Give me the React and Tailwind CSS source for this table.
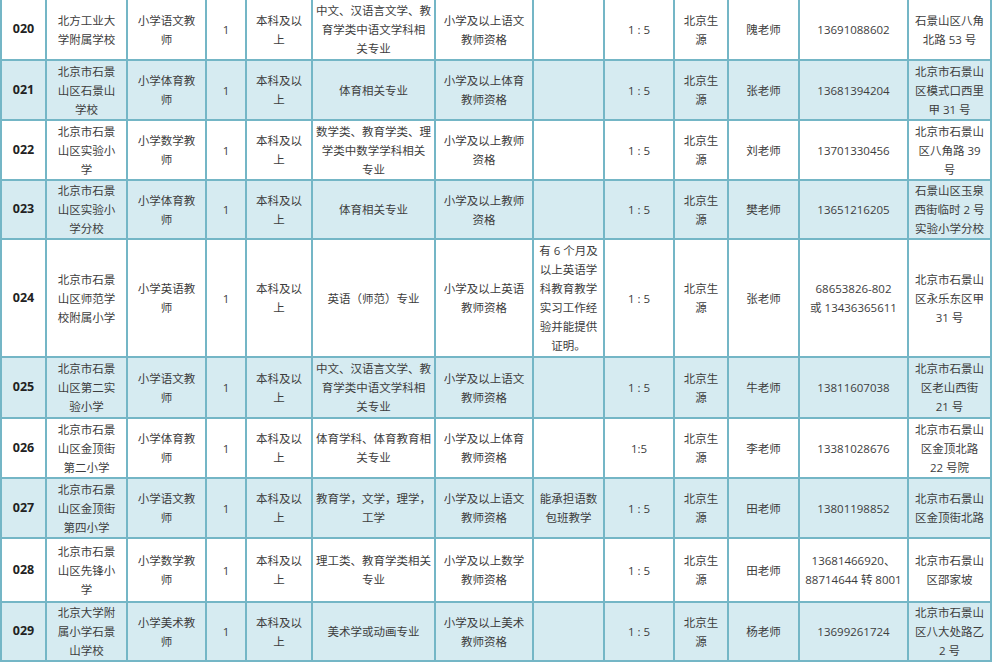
const cols = [45, 81, 79, 40, 66, 123, 98, 71, 70, 54, 71, 109, 83];

const rows = [
  {
    h: "h-[60px]",
    no: "020",
    cells: [
      ["北方工业大", "学附属学校"],
      ["小学语文教", "师"],
      ["1"],
      ["本科及以", "上"],
      ["中文、汉语言文学、教", "育学类中语文学科相", "关专业"],
      ["小学及以上语文", "教师资格"],
      [],
      ["1 : 5"],
      ["北京生", "源"],
      ["隗老师"],
      ["13691088602"],
      ["石景山区八角", "北路 53 号"],
    ],
  },
  {
    h: "h-[60px]",
    no: "021",
    cells: [
      ["北京市石景", "山区石景山", "学校"],
      ["小学体育教", "师"],
      ["1"],
      ["本科及以", "上"],
      ["体育相关专业"],
      ["小学及以上体育", "教师资格"],
      [],
      ["1 : 5"],
      ["北京生", "源"],
      ["张老师"],
      ["13681394204"],
      ["北京市石景山", "区模式口西里", "甲 31 号"],
    ],
  },
  {
    h: "h-[60px]",
    no: "022",
    cells: [
      ["北京市石景", "山区实验小", "学"],
      ["小学数学教", "师"],
      ["1"],
      ["本科及以", "上"],
      ["数学类、教育学类、理", "学类中数学学科相关", "专业"],
      ["小学及以上教师", "资格"],
      [],
      ["1 : 5"],
      ["北京生", "源"],
      ["刘老师"],
      ["13701330456"],
      ["北京市石景山", "区八角路 39", "号"],
    ],
  },
  {
    h: "h-[59px]",
    no: "023",
    cells: [
      ["北京市石景", "山区实验小", "学分校"],
      ["小学体育教", "师"],
      ["1"],
      ["本科及以", "上"],
      ["体育相关专业"],
      ["小学及以上教师", "资格"],
      [],
      ["1 : 5"],
      ["北京生", "源"],
      ["樊老师"],
      ["13651216205"],
      ["石景山区玉泉", "西街临时 2 号", "实验小学分校"],
    ],
  },
  {
    h: "h-[118px]",
    no: "024",
    cells: [
      ["北京市石景", "山区师范学", "校附属小学"],
      ["小学英语教", "师"],
      ["1"],
      ["本科及以", "上"],
      ["英语（师范）专业"],
      ["小学及以上英语", "教师资格"],
      ["有 6 个月及", "以上英语学", "科教育教学", "实习工作经", "验并能提供", "证明。"],
      ["1 : 5"],
      ["北京生", "源"],
      ["张老师"],
      ["68653826-802", "或 13436365611"],
      ["北京市石景山", "区永乐东区甲", "31 号"],
    ],
  },
  {
    h: "h-[61px]",
    no: "025",
    cells: [
      ["北京市石景", "山区第二实", "验小学"],
      ["小学语文教", "师"],
      ["1"],
      ["本科及以", "上"],
      ["中文、汉语言文学、教", "育学类中语文学科相", "关专业"],
      ["小学及以上语文", "教师资格"],
      [],
      ["1 : 5"],
      ["北京生", "源"],
      ["牛老师"],
      ["13811607038"],
      ["北京市石景山", "区老山西街", "21 号"],
    ],
  },
  {
    h: "h-[60px]",
    no: "026",
    cells: [
      ["北京市石景", "山区金顶街", "第二小学"],
      ["小学体育教", "师"],
      ["1"],
      ["本科及以", "上"],
      ["体育学科、体育教育相", "关专业"],
      ["小学及以上体育", "教师资格"],
      [],
      ["1:5"],
      ["北京生", "源"],
      ["李老师"],
      ["13381028676"],
      ["北京市石景山", "区金顶北路", "22 号院"],
    ],
  },
  {
    h: "h-[60px]",
    no: "027",
    cells: [
      ["北京市石景", "山区金顶街", "第四小学"],
      ["小学语文教", "师"],
      ["1"],
      ["本科及以", "上"],
      ["教育学，文学，理学，", "工学"],
      ["小学及以上语文", "教师资格"],
      ["能承担语数", "包班教学"],
      ["1 : 5"],
      ["北京生", "源"],
      ["田老师"],
      ["13801198852"],
      ["北京市石景山", "区金顶街北路"],
    ],
  },
  {
    h: "h-[64px]",
    no: "028",
    cells: [
      ["北京市石景", "山区先锋小", "学"],
      ["小学数学教", "师"],
      ["1"],
      ["本科及以", "上"],
      ["理工类、教育学类相关", "专业"],
      ["小学及以上数学", "教师资格"],
      [],
      ["1 : 5"],
      ["北京生", "源"],
      ["田老师"],
      ["13681466920、", "88714644 转 8001"],
      ["北京市石景山", "区邵家坡"],
    ],
  },
  {
    h: "h-[59px]",
    no: "029",
    cells: [
      ["北京大学附", "属小学石景", "山学校"],
      ["小学美术教", "师"],
      ["1"],
      ["本科及以", "上"],
      ["美术学或动画专业"],
      ["小学及以上美术", "教师资格"],
      [],
      ["1 : 5"],
      ["北京生", "源"],
      ["杨老师"],
      ["13699261724"],
      ["北京市石景山", "区八大处路乙", "2 号"],
    ],
  },
];

const App = () => {
  return (
    <div className="w-[1000px] h-[663px] overflow-hidden bg-white font-['Open_Sans','Noto_Sans_CJK_SC',sans-serif] text-[#3d3d3d]">
      <table className="table-fixed border-collapse w-[990px]">
        <colgroup>
          {cols.map((w, i) => (
            <col key={i} style={{ width: w }} />
          ))}
        </colgroup>
        <tbody>
          {rows.map((row, r) => (
            <tr key={row.no} className={`${row.h} ${r % 2 === 1 ? "bg-[#d6ebf1]" : "bg-white"}`}>
              <td className={`border-2 border-[#74b6c6] text-center align-middle text-[12.5px] font-bold text-[#222] ${r === 0 ? "border-t-0" : ""}`}>
                {row.no}
              </td>
              {row.cells.map((lines, c) => (
                <td
                  key={c}
                  className={`border-2 border-[#74b6c6] text-center align-middle p-0 text-[11.5px] leading-[19px] whitespace-nowrap ${r === 0 ? "border-t-0" : ""}`}
                >
                  {lines.map((t, k) => (
                    <div key={k}>{t}</div>
                  ))}
                </td>
              ))}
            </tr>
          ))}
        </tbody>
      </table>
    </div>
  );
};

export default App;
